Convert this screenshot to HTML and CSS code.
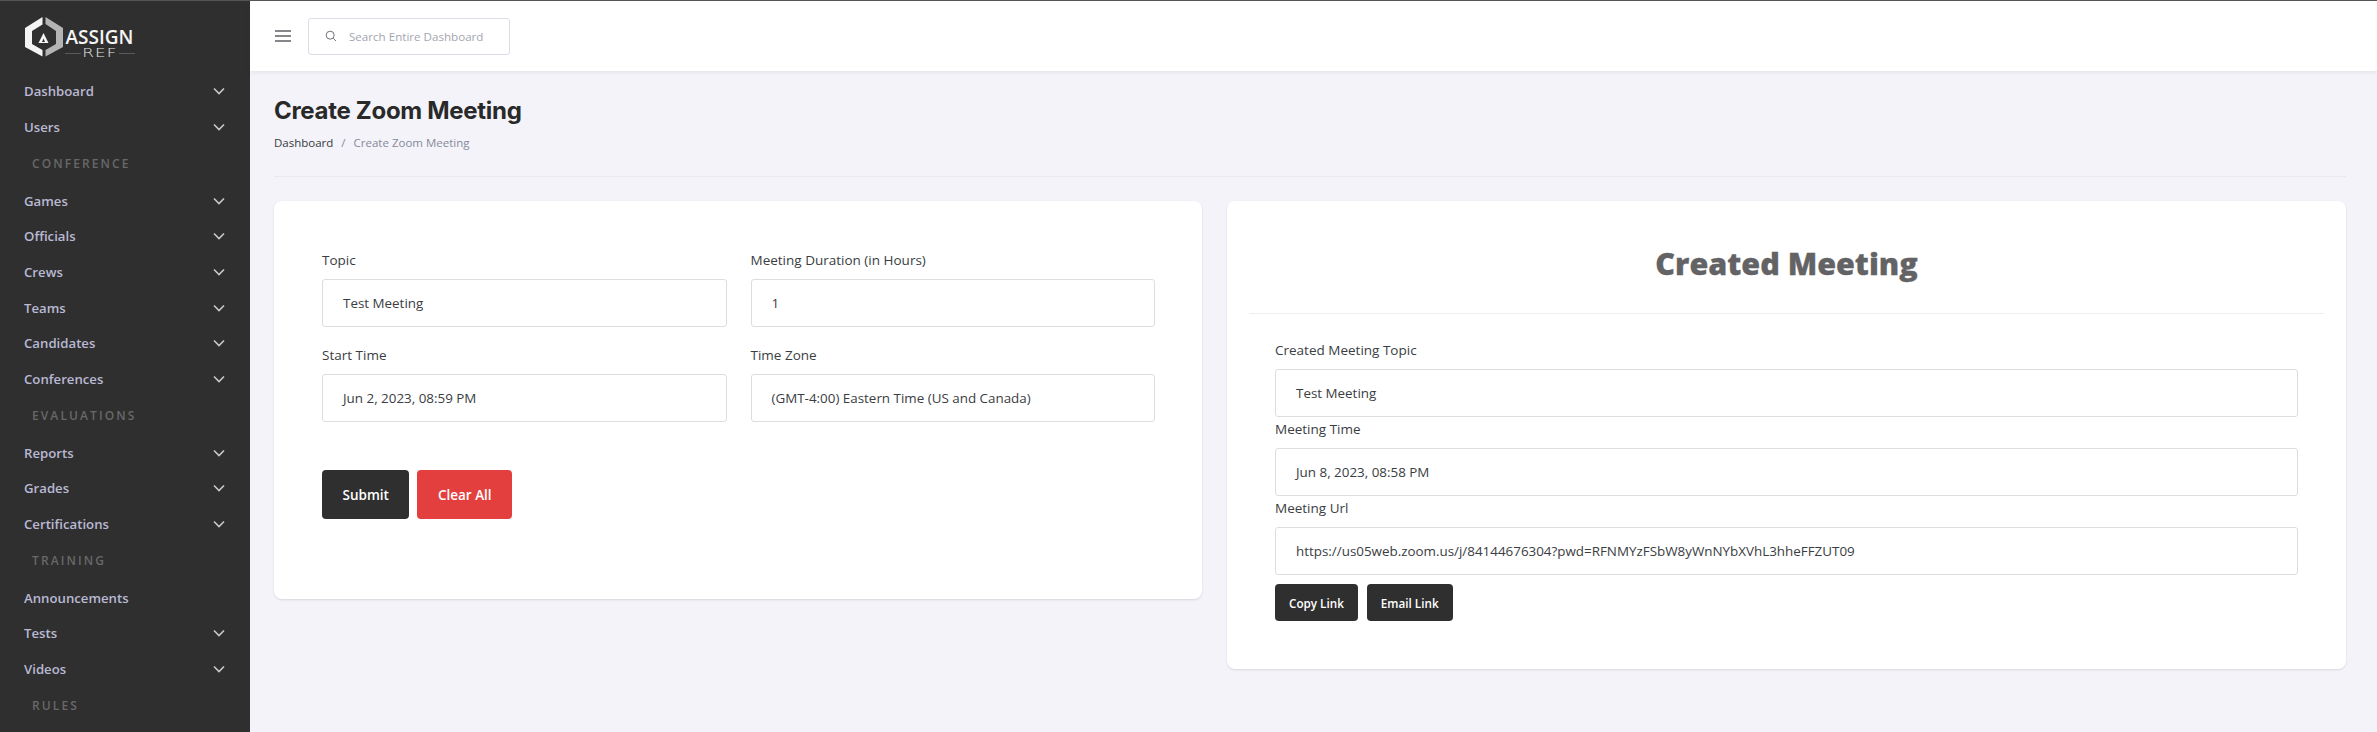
FILE: index.html
```html
<!DOCTYPE html>
<html lang="en">
<head>
<meta charset="utf-8">
<title>Create Zoom Meeting</title>
<link rel="stylesheet" href="styles.css">
</head>
<body>
<div class="layout">
  <aside class="sidebar">
    <div class="brand">
      <svg class="brand-mark" viewBox="0 0 38 40" width="38" height="40" aria-hidden="true">
        <path d="M17.5 0L0 11V30L17.5 39.5V33L7 27V14L17.5 7.5Z" fill="#f4f4f4"/>
        <path d="M20.5 0L38 11V30L20.5 39.5V33L31 27V14L20.5 7Z" fill="#b4b4b4"/>
        <path d="M18.5 16L23.5 26H13.5Z" fill="#f4f4f4"/>
        <path d="M18.5 21.5L20 25H17Z" fill="#2f2f2f"/>
      </svg>
      <div class="brand-text">
        <span class="brand-name">ASSIGN</span>
        <div class="brand-sub"><span class="brand-sub-text">REF</span></div>
      </div>
    </div>
    <nav class="nav">
      <a class="nav-item">Dashboard<svg class="chev" viewBox="0 0 12 8"><path d="M1 1.5L6 6.5L11 1.5"/></svg></a>
      <a class="nav-item">Users<svg class="chev" viewBox="0 0 12 8"><path d="M1 1.5L6 6.5L11 1.5"/></svg></a>
      <div class="nav-title">CONFERENCE</div>
      <a class="nav-item">Games<svg class="chev" viewBox="0 0 12 8"><path d="M1 1.5L6 6.5L11 1.5"/></svg></a>
      <a class="nav-item">Officials<svg class="chev" viewBox="0 0 12 8"><path d="M1 1.5L6 6.5L11 1.5"/></svg></a>
      <a class="nav-item">Crews<svg class="chev" viewBox="0 0 12 8"><path d="M1 1.5L6 6.5L11 1.5"/></svg></a>
      <a class="nav-item">Teams<svg class="chev" viewBox="0 0 12 8"><path d="M1 1.5L6 6.5L11 1.5"/></svg></a>
      <a class="nav-item">Candidates<svg class="chev" viewBox="0 0 12 8"><path d="M1 1.5L6 6.5L11 1.5"/></svg></a>
      <a class="nav-item">Conferences<svg class="chev" viewBox="0 0 12 8"><path d="M1 1.5L6 6.5L11 1.5"/></svg></a>
      <div class="nav-title">EVALUATIONS</div>
      <a class="nav-item">Reports<svg class="chev" viewBox="0 0 12 8"><path d="M1 1.5L6 6.5L11 1.5"/></svg></a>
      <a class="nav-item">Grades<svg class="chev" viewBox="0 0 12 8"><path d="M1 1.5L6 6.5L11 1.5"/></svg></a>
      <a class="nav-item">Certifications<svg class="chev" viewBox="0 0 12 8"><path d="M1 1.5L6 6.5L11 1.5"/></svg></a>
      <div class="nav-title">TRAINING</div>
      <a class="nav-item">Announcements</a>
      <a class="nav-item">Tests<svg class="chev" viewBox="0 0 12 8"><path d="M1 1.5L6 6.5L11 1.5"/></svg></a>
      <a class="nav-item">Videos<svg class="chev" viewBox="0 0 12 8"><path d="M1 1.5L6 6.5L11 1.5"/></svg></a>
      <div class="nav-title">RULES</div>
    </nav>
  </aside>
  <div class="main">
    <header class="topbar">
      <svg class="menu-icon" viewBox="0 0 16 12" width="16" height="12" aria-hidden="true"><path d="M0 1H16M0 6H16M0 11H16"/></svg>
      <div class="search">
        <svg class="search-icon" viewBox="0 0 12 12" width="12" height="12" aria-hidden="true"><circle cx="5.2" cy="5.2" r="4"/><path d="M8.2 8.2L11 11"/></svg>
        <span>Search Entire Dashboard</span>
      </div>
    </header>
    <main class="content">
      <div class="page-head">
        <h1>Create Zoom Meeting</h1>
        <div class="crumbs"><span class="crumb-link">Dashboard</span><span class="crumb-sep">/</span><span>Create Zoom Meeting</span></div>
      </div>
      <div class="cards">
        <section class="card form-card">
          <div class="form-grid">
            <div class="field"><label>Topic</label><div class="control">Test Meeting</div></div>
            <div class="field"><label>Meeting Duration (in Hours)</label><div class="control">1</div></div>
            <div class="field"><label>Start Time</label><div class="control">Jun 2, 2023, 08:59 PM</div></div>
            <div class="field"><label>Time Zone</label><div class="control">(GMT-4:00) Eastern Time (US and Canada)</div></div>
          </div>
          <div class="actions">
            <button class="btn btn-dark">Submit</button>
            <button class="btn btn-red">Clear All</button>
          </div>
        </section>
        <section class="card result-card">
          <h2>Created Meeting</h2>
          <div class="result-body">
            <div class="field tight"><label>Created Meeting Topic</label><div class="control">Test Meeting</div></div>
            <div class="field tight"><label>Meeting Time</label><div class="control">Jun 8, 2023, 08:58 PM</div></div>
            <div class="field tight"><label>Meeting Url</label><div class="control">https://us05web.zoom.us/j/84144676304?pwd=RFNMYzFSbW8yWnNYbXVhL3hheFFZUT09</div></div>
            <div class="actions small">
              <button class="btn btn-dark btn-sm">Copy Link</button>
              <button class="btn btn-dark btn-sm">Email Link</button>
            </div>
          </div>
        </section>
      </div>
    </main>
  </div>
</div>
</body>
</html>
```
FILE: styles.css
```css
* { box-sizing: border-box; }
html, body { margin: 0; height: 100%; overflow: hidden; }
body { font-family: "Open Sans", "Liberation Sans", sans-serif; background: #f3f3f9; color: #343a40; font-size: 13px; }
.layout { display: flex; height: 732px; border-top: 1px solid #555; }
.sidebar { width: 250px; flex: none; background: #2f2f2f; overflow: hidden; }
.brand { display: flex; align-items: flex-start; height: 72.5px; padding: 16px 0 0 24.5px; }
.brand-mark { flex: none; }
.brand-text { margin-left: 2px; display: flex; flex-direction: column; align-items: center; width: 70px; }
.brand-name { font-weight: 600; font-size: 19px; line-height: 26px; margin-top: 6.5px; color: #f4f4f4; }
.brand-sub { width: 100%; display: flex; align-items: center; margin-top: -1px; height: 9px; }
.brand-sub::before, .brand-sub::after { content: ""; flex: 1; height: 1px; background: #5a5a5a; }
.brand-sub-text { width: 38px; text-align: center; font-family: "DejaVu Sans", sans-serif; font-weight: 200; font-size: 12px; line-height: 9px; color: #e6e6e6; letter-spacing: 0.8px; transform: scaleX(1.4); }
.nav { display: flex; flex-direction: column; }
.nav-item { display: flex; align-items: center; justify-content: space-between; height: 35.6px; padding: 0 25px 0 24px; color: #b9b9d3; font-weight: 600; font-size: 13.2px; }
.chev { width: 12px; height: 8px; fill: none; stroke: #c9c9c9; stroke-width: 1.6; }
.nav-title { height: 38.3px; padding: 0 0 1px 32px; display: flex; align-items: center; color: #686868; font-size: 12px; font-weight: 600; letter-spacing: 2.1px; }
.main { flex: 1; min-width: 0; display: flex; flex-direction: column; }
.topbar { height: 70px; flex: none; background: #fff; display: flex; align-items: center; padding-left: 25px; box-shadow: 0 1px 4px rgba(56, 65, 74, .1); }
.menu-icon { fill: none; stroke: #5f5f66; stroke-width: 1.6; flex: none; }
.search { margin-left: 17px; width: 202px; height: 37px; border: 1px solid #dcdce6; border-radius: 3px; display: flex; align-items: center; padding-left: 16px; gap: 12px; color: #a3a6b0; font-size: 11.6px; }
.search-icon { fill: none; stroke: #70727a; stroke-width: 1; flex: none; }
.content { flex: 1; padding: 0 31px 0 24px; }
.page-head { height: 106px; border-bottom: 1px solid #e9e9ef; padding-top: 23px; }
h1 { margin: 0; font-family: Inter, sans-serif; font-weight: 700; font-size: 24px; letter-spacing: -0.3px; line-height: 34px; color: #292929; }
.crumbs { margin-top: 5px; font-size: 11.5px; line-height: 20px; color: #878a99; display: flex; }
.crumb-link { color: #343a40; }
.crumb-sep { margin: 0 8px; }
.cards { display: grid; grid-template-columns: 928fr 1119fr; gap: 25px; margin-top: 24px; align-items: start; }
.card { background: #fff; border-radius: 8px; box-shadow: 0 1px 2px rgba(56, 65, 74, .15); }
.form-card { height: 398px; padding: 49px 47px 0 48px; }
.form-grid { display: grid; grid-template-columns: 1fr 1fr; gap: 18px 24px; }
.field { display: flex; flex-direction: column; }
label { font-size: 13.5px; line-height: 20px; color: #3a3d42; margin-bottom: 9px; }
.control { height: 48px; border: 1px solid #dcdde0; border-radius: 3px; display: flex; align-items: center; padding: 0 20px; font-size: 13.4px; color: #3a3d42; background: #fff; }
.actions { display: flex; gap: 8px; margin-top: 48px; }
.btn { border: 0; border-radius: 4px; height: 49px; padding: 0 20.5px; font: 600 13.5px "Open Sans", sans-serif; color: #fff; }
.btn-dark { background: #2f2f2f; }
.btn-red { background: #e43f3f; }
.result-card { height: 468px; }
h2 { margin: 0 22px; height: 113px; border-bottom: 1px solid #eeeef2; display: flex; align-items: center; justify-content: center; font-weight: 800; font-size: 30.5px; color: #636366; padding-top: 12px; -webkit-text-stroke: 0.3px #636366; }
.result-body { padding: 26px 48px 0 48px; }
.field.tight + .field.tight { margin-top: 2px; }
.actions.small { margin-top: 9px; gap: 9px; }
.btn-sm { height: 37px; padding: 0 14px; font-size: 11.7px; }
```
